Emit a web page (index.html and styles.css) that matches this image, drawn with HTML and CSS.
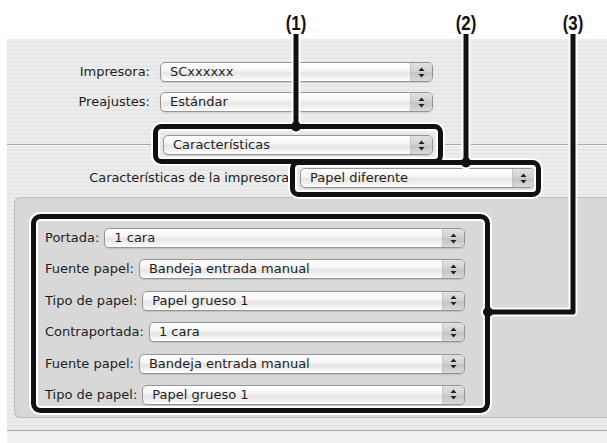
FILE: index.html
```html
<!DOCTYPE html>
<html lang="es">
<head>
    <meta charset="UTF-8">
    <title>Características de la impresora</title>
    <link rel="stylesheet" href="styles.css">
</head>
<body>
    <div class="page">
        <div class="head"></div>
        <div class="window">
            <div class="form-row first">
                <span class="label top-label">Impresora:</span>
                <div class="popup top-popup"><span class="value">SCxxxxxx</span><span class="arrows"><svg width="7" height="11" viewBox="0 0 7 11"><path d="M3.5 0.5 L6.5 4 L0.5 4 Z M3.5 10.5 L6.5 7 L0.5 7 Z" fill="#222"/></svg></span></div>
            </div>
            <div class="form-row">
                <span class="label top-label">Preajustes:</span>
                <div class="popup top-popup"><span class="value">Estándar</span><span class="arrows"><svg width="7" height="11" viewBox="0 0 7 11"><path d="M3.5 0.5 L6.5 4 L0.5 4 Z M3.5 10.5 L6.5 7 L0.5 7 Z" fill="#222"/></svg></span></div>
            </div>
            <div class="sep-row">
                <div class="rule rule-left"></div>
                <div class="sep-slot">
                    <div class="popup"><span class="value">Características</span><span class="arrows"><svg width="7" height="11" viewBox="0 0 7 11"><path d="M3.5 0.5 L6.5 4 L0.5 4 Z M3.5 10.5 L6.5 7 L0.5 7 Z" fill="#222"/></svg></span></div>
                </div>
                <div class="rule"></div>
            </div>
            <div class="form-row features">
                <span class="label features-label">Características de la impresora</span>
                <div class="popup features-popup"><span class="value">Papel diferente</span><span class="arrows"><svg width="7" height="11" viewBox="0 0 7 11"><path d="M3.5 0.5 L6.5 4 L0.5 4 Z M3.5 10.5 L6.5 7 L0.5 7 Z" fill="#222"/></svg></span></div>
            </div>
            <div class="group">
                <div class="group-row">
                    <span class="label">Portada:</span>
                    <div class="popup"><span class="value">1 cara</span><span class="arrows"><svg width="7" height="11" viewBox="0 0 7 11"><path d="M3.5 0.5 L6.5 4 L0.5 4 Z M3.5 10.5 L6.5 7 L0.5 7 Z" fill="#222"/></svg></span></div>
                </div>
                <div class="group-row">
                    <span class="label">Fuente papel:</span>
                    <div class="popup"><span class="value">Bandeja entrada manual</span><span class="arrows"><svg width="7" height="11" viewBox="0 0 7 11"><path d="M3.5 0.5 L6.5 4 L0.5 4 Z M3.5 10.5 L6.5 7 L0.5 7 Z" fill="#222"/></svg></span></div>
                </div>
                <div class="group-row">
                    <span class="label">Tipo de papel:</span>
                    <div class="popup"><span class="value">Papel grueso 1</span><span class="arrows"><svg width="7" height="11" viewBox="0 0 7 11"><path d="M3.5 0.5 L6.5 4 L0.5 4 Z M3.5 10.5 L6.5 7 L0.5 7 Z" fill="#222"/></svg></span></div>
                </div>
                <div class="group-row">
                    <span class="label">Contraportada:</span>
                    <div class="popup"><span class="value">1 cara</span><span class="arrows"><svg width="7" height="11" viewBox="0 0 7 11"><path d="M3.5 0.5 L6.5 4 L0.5 4 Z M3.5 10.5 L6.5 7 L0.5 7 Z" fill="#222"/></svg></span></div>
                </div>
                <div class="group-row">
                    <span class="label">Fuente papel:</span>
                    <div class="popup"><span class="value">Bandeja entrada manual</span><span class="arrows"><svg width="7" height="11" viewBox="0 0 7 11"><path d="M3.5 0.5 L6.5 4 L0.5 4 Z M3.5 10.5 L6.5 7 L0.5 7 Z" fill="#222"/></svg></span></div>
                </div>
                <div class="group-row">
                    <span class="label">Tipo de papel:</span>
                    <div class="popup"><span class="value">Papel grueso 1</span><span class="arrows"><svg width="7" height="11" viewBox="0 0 7 11"><path d="M3.5 0.5 L6.5 4 L0.5 4 Z M3.5 10.5 L6.5 7 L0.5 7 Z" fill="#222"/></svg></span></div>
                </div>
            </div>
            <div class="bottom-rule"></div>
            <div class="bottom-strip"></div>
        </div>

        <!-- callout annotations drawn over the dialog -->
        <svg class="callouts" width="607" height="443" viewBox="0 0 607 443">
            <g fill="none" stroke="#fff" stroke-width="9" stroke-linejoin="round">
                <rect x="155.5" y="126.5" width="285" height="35" rx="6"/>
                <rect x="292.5" y="162.5" width="246" height="32" rx="6"/>
                <rect x="33.5" y="216.5" width="454" height="194" rx="7"/>
                <path d="M296 34 V126 M466 34 V162 M573 34 V312 H488"/>
            </g>
            <g fill="#fff">
                <circle cx="296" cy="126.5" r="7"/>
                <circle cx="466" cy="162.5" r="7"/>
                <circle cx="488" cy="312" r="7"/>
            </g>
            <g fill="none" stroke="#111" stroke-width="5" stroke-linejoin="round">
                <rect x="155.5" y="126.5" width="285" height="35" rx="6"/>
                <rect x="292.5" y="162.5" width="246" height="32" rx="6"/>
                <rect x="33.5" y="216.5" width="454" height="194" rx="7"/>
                <path d="M296 34 V126 M466 34 V162 M573 34 V312 H488"/>
            </g>
            <g fill="#111">
                <circle cx="296" cy="126.5" r="5"/>
                <circle cx="466" cy="162.5" r="5"/>
                <circle cx="488" cy="312" r="5"/>
            </g>
        </svg>
        <span class="callout-num num-1">(1)</span>
        <span class="callout-num num-2">(2)</span>
        <span class="callout-num num-3">(3)</span>
    </div>
</body>
</html>
```

FILE: styles.css
```css
body {
    margin: 0;
    background: #fff;
    font-family: "DejaVu Sans", "Open Sans", sans-serif;
    font-size: 13px;
    color: #1e1e1e;
}
.page {
    position: relative;
    width: 607px;
    height: 443px;
    overflow: hidden;
}
.head {
    height: 39px;
}
.window {
    margin-left: 7px;
    height: 404px;
    background: repeating-linear-gradient(to bottom, #ededed 0, #ededed 2px, #e6e6e6 2px, #e6e6e6 4px);
    display: flex;
    flex-direction: column;
}
.form-row {
    display: flex;
    align-items: center;
    margin-top: 10px;
}
.form-row.first {
    margin-top: 23px;
}
.label {
    white-space: nowrap;
    line-height: 20px;
}
.top-label {
    width: 143px;
    text-align: right;
    margin-right: 10px;
}
.top-popup {
    width: 273px;
}

/* popup buttons */
.popup {
    display: flex;
    height: 20px;
    box-sizing: border-box;
    border: 1px solid #959595;
    border-radius: 5px;
    background: linear-gradient(to bottom, #ffffff 0%, #f6f6f6 40%, #e5e5e5 55%, #f1f1f1 80%, #ffffff 100%);
    box-shadow: 0 1px 1px rgba(0, 0, 0, 0.12);
    overflow: hidden;
}
.popup .value {
    flex: 1;
    padding-left: 9px;
    line-height: 18px;
    white-space: nowrap;
}
.popup .arrows {
    width: 21px;
    display: flex;
    align-items: center;
    justify-content: center;
    border-left: 1px solid #c4c4c4;
    background: linear-gradient(to bottom, #e2e2e2 0%, #d0d0d0 50%, #c3c3c3 55%, #dadada 100%);
}

.sep-row {
    display: flex;
    align-items: center;
    margin-top: 23px;
}
.rule {
    flex: 1;
    height: 1px;
    background: #a9a9a9;
    border-bottom: 1px solid #f8f8f8;
}
.rule-left {
    flex: 0 0 148px;
}
.sep-slot {
    padding: 0 8px;
}
.sep-slot .popup {
    width: 270px;
}

.features {
    margin-top: 13px;
}
.features-label {
    width: 282px;
    text-align: right;
    margin-right: 11px;
    letter-spacing: -0.1px;
}
.features-popup {
    width: 235px;
}

.group {
    margin: 9px 0 0 7px;
    padding: 30px 0 12px 30px;
    background: #d8d8d8;
    border: 1px solid #bdbdbd;
    border-right: none;
    border-radius: 6px 0 0 6px;
    display: flex;
    flex-direction: column;
    gap: 11.4px;
}
.group-row {
    width: 420px;
    display: flex;
    align-items: center;
    gap: 5px;
}
.group-row .popup {
    flex: 1;
}

.bottom-rule {
    margin-top: 12px;
    height: 1px;
    background: #a8a8a8;
}
.bottom-strip {
    flex: 1;
    background: #f0f0f0;
}

.callouts {
    position: absolute;
    left: 0;
    top: 0;
}
.callout-num {
    position: absolute;
    top: 12px;
    width: 40px;
    text-align: center;
    font-family: "Liberation Sans", Arial, sans-serif;
    font-weight: bold;
    font-size: 21px;
    line-height: 22px;
    color: #111;
    transform: scaleX(0.8);
}
.num-1 { left: 276px; }
.num-2 { left: 446px; }
.num-3 { left: 553px; }
```
